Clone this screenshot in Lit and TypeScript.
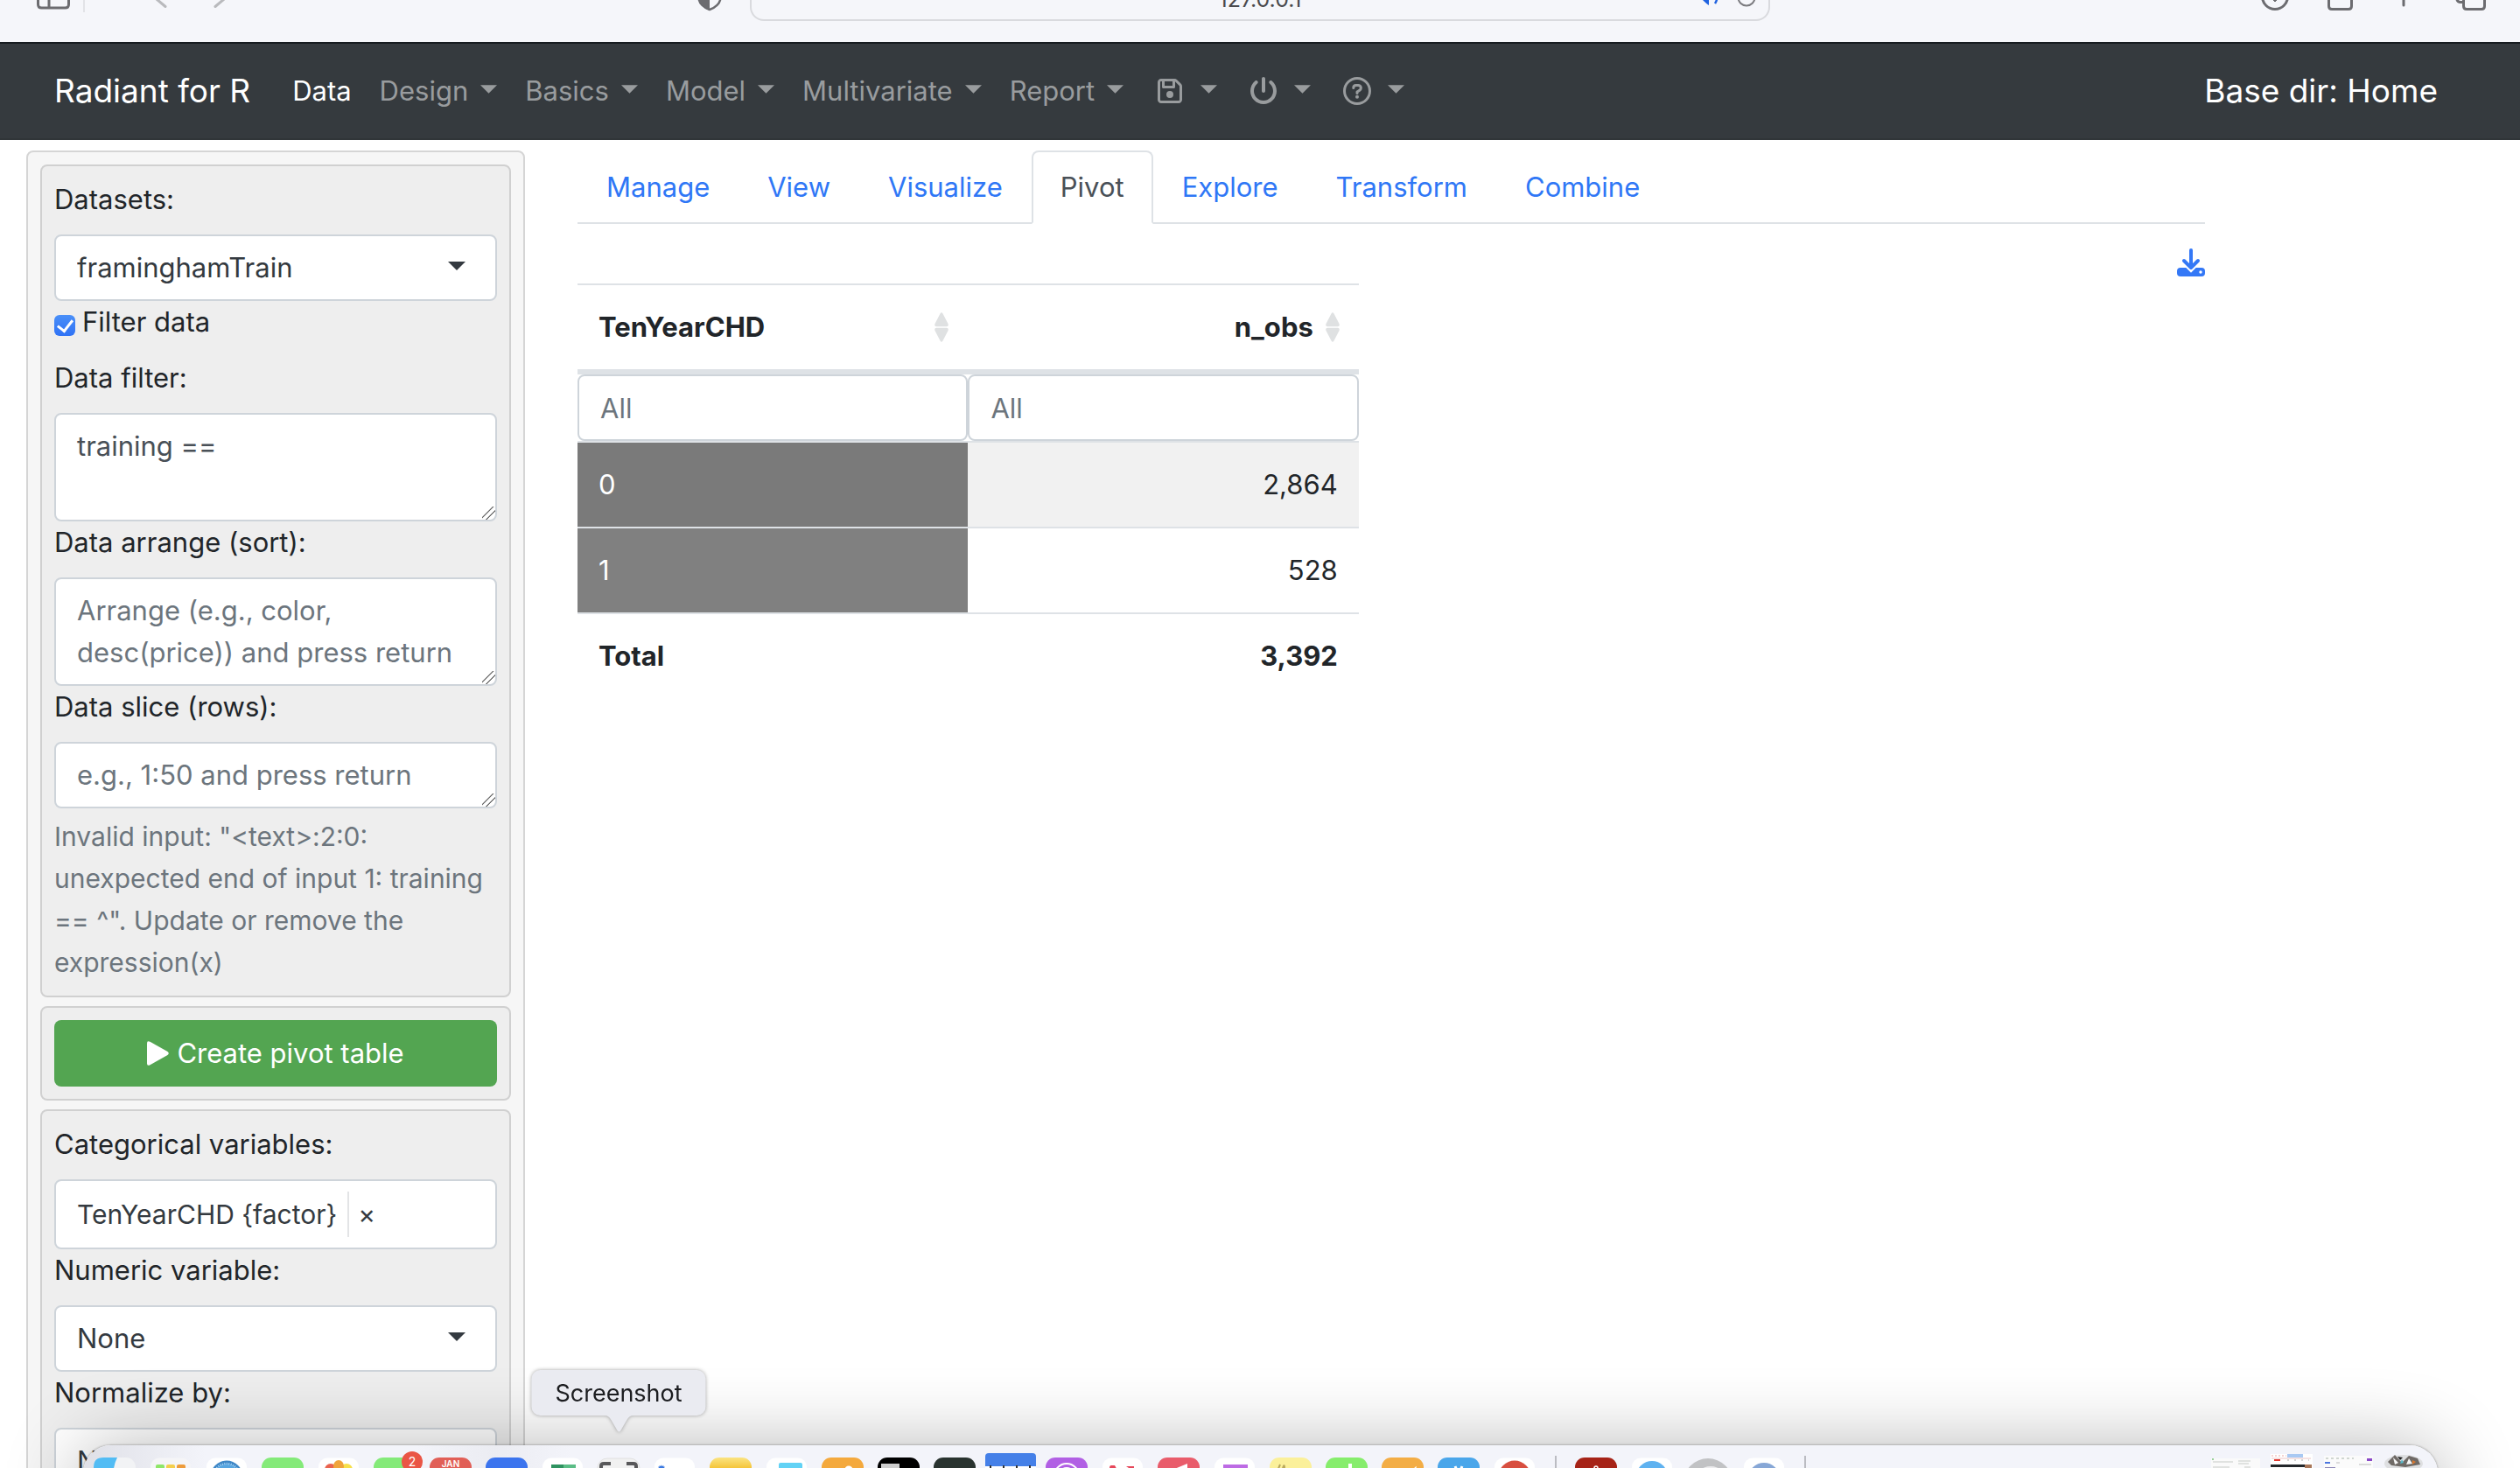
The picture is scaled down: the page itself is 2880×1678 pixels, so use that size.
import { LitElement, html, css, svg, nothing } from "lit";
import { customElement, property } from "lit/decorators.js";

const FONT = css`
  *,
  :host {
    box-sizing: border-box;
  }
  :host {
    font-family: Inter, "Liberation Sans", sans-serif;
    font-size: 31px;
    line-height: 48px;
    color: #212529;
  }
  svg {
    display: block;
    flex: none;
  }
`;

const caret = html`<svg class="caret" width="20" height="10" viewBox="0 0 20 10" aria-hidden="true">
  <path d="M0 0H20L10 10Z" fill="currentColor" />
</svg>`;

@customElement("browser-bar")
export class BrowserBar extends LitElement {
  static styles = [
    FONT,
    css`
      :host {
        display: flex;
        align-items: flex-start;
        height: 48px;
        padding: 0 38px;
        background: #f5f6fa;
        color: #6c6c70;
        overflow: hidden;
      }
      .side {
        display: flex;
        flex: 1;
      }
      .back {
        margin-left: 15px;
      }
      .shield {
        margin-left: auto;
        margin-right: 32px;
      }
      .address {
        display: flex;
        justify-content: flex-end;
        align-items: flex-start;
        position: relative;
        width: 1166px;
        height: 24px;
        padding-right: 14px;
        border: 2px solid #d9dade;
        border-top: 0;
        border-radius: 0 0 16px 16px;
      }
      .host {
        position: absolute;
        left: 0;
        right: 0;
        bottom: 7px;
        text-align: center;
        font-size: 25px;
        line-height: 32px;
        color: #4a4a4d;
      }
      .tools {
        justify-content: flex-end;
      }
    `,
  ];

  render() {
    return html`
      <div class="side">
        <svg width="42" height="12" viewBox="-4 0 42 12" fill="none" stroke="currentColor" stroke-width="3">
          <path d="M1.500-4V5Q1.500 9 5.500 9H32.500Q36.500 9 36.500 5V-4M14 -4V9" />
        </svg>
        <svg class="back" width="164" height="16" viewBox="0 0 164 16" fill="none">
          <path d="M1 0V14" stroke="#e2e3e7" stroke-width="2" />
          <path d="M84-1L94 7.500M161-1L151 7.500" stroke="#b9babd" stroke-width="3" stroke-linecap="round" />
        </svg>
        <svg class="shield" width="28" height="13" viewBox="0 0 28 13">
          <path d="M1.500-3C1.500 4 8 9 14 11C20 9 26.500 4 26.500-3" fill="none" stroke="currentColor" stroke-width="2.500" />
          <path d="M1-3C1 4 8 10 14 12V-3Z" fill="currentColor" />
        </svg>
      </div>
      <div class="address">
        <span class="host">127.0.0.1</span>
        <svg width="62" height="10" viewBox="0 0 62 10">
          <path d="M1-2H8V6Q6 5 1 0Z" fill="#1f62e0" />
          <path d="M17-1Q17 1 15 4" fill="none" stroke="#1f62e0" stroke-width="2.500" />
          <circle cx="51" cy="-3" r="9.500" fill="none" stroke="#7b7b7f" stroke-width="2" />
        </svg>
      </div>
      <div class="side tools">
        <svg width="258" height="13" viewBox="0 0 258 13" fill="none" stroke="currentColor" stroke-width="3">
          <circle cx="16" cy="-4" r="14.500" />
          <path d="M11.500-2.500L16 2L20.500-2.500Z" fill="currentColor" stroke-width="1" />
          <path d="M77.500-4V7Q77.500 10.500 81 10.500H100Q103.500 10.500 103.500 7V-4" />
          <path d="M163-4V6" stroke-linecap="round" />
          <path d="M223.500-4Q223.500 2.500 228 2.500H231" />
          <path d="M231.500-4V7Q231.500 10.500 235 10.500H252Q255.500 10.500 255.500 7V-4" />
        </svg>
      </div>
    `;
  }
}

@customElement("nav-bar")
export class NavBar extends LitElement {
  static styles = [
    FONT,
    css`
      :host {
        display: flex;
        align-items: center;
        height: 112px;
        padding: 0 94px 0 62px;
        background: #353a3e;
        border-top: 2px solid #161b1f;
        border-bottom: 2px solid #303538;
      }
      a {
        color: inherit;
        text-decoration: none;
      }
      .brand,
      .base {
        color: #fff;
        font-size: 37px;
        line-height: 60px;
      }
      .base {
        margin-left: auto;
      }
      .menu {
        display: flex;
        margin-left: 32px;
      }
      .item {
        display: flex;
        align-items: center;
        gap: 14px;
        height: 48px;
        padding: 0 16px;
        color: #999c9e;
      }
      .active {
        color: #fff;
      }
      .icon {
        display: grid;
        place-items: center;
        width: 42px;
      }
      .caret {
        width: 19px;
        margin-bottom: 4px;
      }
    `,
  ];

  render() {
    const menus = ["Design", "Basics", "Model", "Multivariate", "Report"];
    const icons = [
      html`<svg width="28" height="32" viewBox="0 0 448 512" fill="currentColor"><path d="M48 96V416c0 8.800 7.200 16 16 16H384c8.800 0 16-7.200 16-16V170.500c0-4.200-1.700-8.300-4.700-11.300l33.900-33.900c12 12 18.700 28.300 18.700 45.300V416c0 35.300-28.700 64-64 64H64c-35.300 0-64-28.700-64-64V96C0 60.700 28.700 32 64 32H309.500c17 0 33.300 6.700 45.300 18.700l74.500 74.500-33.900 33.900L320.800 84.700c-.3-.3-.5-.5-.8-.8V184c0 13.300-10.700 24-24 24H104c-13.300 0-24-10.700-24-24V80H64c-8.800 0-16 7.200-16 16zm80-16v80H272V80H128zm32 240a64 64 0 1 1 128 0 64 64 0 1 1 -128 0z"/></svg>`,
      html`<svg width="32" height="32" viewBox="0 0 512 512" fill="currentColor"><path d="M288 32c0-17.700-14.300-32-32-32s-32 14.300-32 32V256c0 17.700 14.300 32 32 32s32-14.300 32-32V32zM143.500 120.600c13.600-11.300 15.400-31.500 4.100-45.100s-31.500-15.400-45.100-4.100C49.700 115.400 16 181.800 16 256c0 132.500 107.500 240 240 240s240-107.500 240-240c0-74.200-33.800-140.600-86.600-184.600c-13.600-11.300-33.800-9.400-45.100 4.100s-9.400 33.800 4.100 45.100c38.900 32.300 63.500 81 63.500 135.400c0 97.200-78.800 176-176 176s-176-78.800-176-176c0-54.400 24.700-103.100 63.500-135.400z"/></svg>`,
      html`<svg width="32" height="32" viewBox="0 0 32 32" fill="none" stroke="currentColor" stroke-width="3"><circle cx="16" cy="16" r="14.500"/><path d="M11.800 12.500C11.800 10.500 13 9.500 14.600 9.500H17.200C19 9.500 20.400 10.800 20.400 12.600C20.400 14 19.600 14.800 18.600 15.400L16 17V18.500" stroke-linecap="round" stroke-linejoin="round"/><circle cx="16" cy="22.700" r="2" fill="currentColor" stroke="none"/></svg>`,
    ];
    return html`
      <a class="brand" href="#">Radiant for R</a>
      <nav class="menu">
        <a class="item active" href="#">Data</a>
        ${menus.map((m) => html`<a class="item" href="#">${m}${caret}</a>`)}
        ${icons.map((i) => html`<a class="item" href="#"><span class="icon">${i}</span>${caret}</a>`)}
      </nav>
      <a class="base" href="#">Base dir: Home</a>
    `;
  }
}

@customElement("side-panel")
export class SidePanel extends LitElement {
  static styles = [
    FONT,
    css`
      :host {
        display: flex;
        flex-direction: column;
        gap: 10px;
        min-width: 0;
        padding: 14px;
        border: 2px solid #d5d5d5;
        border-radius: 8px;
        background: #f6f6f6;
      }
      .well {
        padding: 14px;
        border: 2px solid #d0d0d0;
        border-radius: 8px;
        background: #eee;
      }
      label {
        display: block;
      }
      .field {
        margin-bottom: 16px;
      }
      .check {
        display: flex;
        align-items: center;
        gap: 8px;
        margin-bottom: 16px;
      }
      .check input {
        appearance: none;
        display: grid;
        place-items: center;
        width: 24px;
        height: 24px;
        margin: 8px 0 0;
        border-radius: 6px;
        background: linear-gradient(#4a8ff8, #2f72f5);
      }
      .check input::after {
        content: "";
        width: 8px;
        height: 14px;
        margin-bottom: 4px;
        border: solid #fff;
        border-width: 0 3px 3px 0;
        transform: rotate(38deg);
      }
      .select,
      textarea,
      select,
      .tokens {
        display: block;
        width: 100%;
        font: inherit;
      }
      textarea,
      select,
      .tokens {
        margin: 0;
        padding: 12px 24px;
        border: 2px solid #ced4da;
        border-radius: 8px;
        background: #fff;
        color: #495057;
      }
      textarea::placeholder {
        color: #6c757d;
        opacity: 1;
      }
      textarea::-webkit-resizer {
        background: linear-gradient(
          135deg,
          transparent 39%,
          #666 41% 45%,
          transparent 47% 62%,
          #666 64% 68%,
          transparent 70%
        );
      }
      .select {
        display: grid;
        align-items: center;
        color: #343a40;
      }
      .select > * {
        grid-area: 1 / 1;
      }
      select {
        appearance: none;
        height: 76px;
        color: #343a40;
      }
      .caret {
        justify-self: end;
        margin-right: 36px;
        margin-bottom: 4px;
        pointer-events: none;
      }
      .help {
        margin: 8px 0 0;
        color: #6c757d;
        font-size: 30px;
      }
      .run {
        display: flex;
        align-items: center;
        justify-content: center;
        gap: 9px;
        width: 100%;
        height: 76px;
        padding: 0;
        border: 0;
        border-radius: 8px;
        background: #53a551;
        color: #fff;
        font: inherit;
      }
      .tokens {
        display: flex;
        align-items: center;
        height: 80px;
        color: #343a40;
        font-size: 30px;
      }
      .remove {
        height: 52px;
        margin-left: 12px;
        padding: 0 10px;
        border: 0;
        border-left: 2px solid #e3e4e6;
        background: none;
        color: inherit;
        font: inherit;
      }
    `,
  ];

  private select(id: string, value: string) {
    return html`<div class="select">
      <select id=${id}><option>${value}</option></select>
      ${caret}
    </div>`;
  }

  render() {
    return html`
      <section class="well">
        <label class="field" for="dataset">Datasets:</label>
        ${this.select("dataset", "framinghamTrain")}
        <label class="check"><input type="checkbox" checked />Filter data</label>
        <label class="field" for="filter">Data filter:</label>
        <textarea id="filter" rows="2" .value=${"training =="}></textarea>
        <label class="field" for="arrange">Data arrange (sort):</label>
        <textarea id="arrange" rows="2" placeholder="Arrange (e.g., color, desc(price)) and press return"></textarea>
        <label class="field" for="slice">Data slice (rows):</label>
        <textarea id="slice" rows="1" placeholder="e.g., 1:50 and press return"></textarea>
        <p class="help">Invalid input: "&lt;text&gt;:2:0: unexpected end of input 1: training == ^". Update or remove the expression(x)</p>
      </section>
      <section class="well">
        <button class="run">
          <svg width="25" height="28" viewBox="0 0 25 28" fill="currentColor" aria-hidden="true">
            <path d="M0 2.500Q0-1 3.500 .8L23.500 12Q26 14 23.500 16L3.500 27.200Q0 29 0 25.500Z" />
          </svg>
          Create pivot table
        </button>
      </section>
      <section class="well">
        <label class="field" id="categorical">Categorical variables:</label>
        <div class="tokens" role="group" aria-labelledby="categorical">TenYearCHD {factor}<button class="remove">×</button></div>
        <label class="field" for="numeric">Numeric variable:</label>
        ${this.select("numeric", "None")}
        <label class="field" for="normalize">Normalize by:</label>
        ${this.select("normalize", "None")}
      </section>
    `;
  }
}

@customElement("pivot-view")
export class PivotView extends LitElement {
  static styles = [
    FONT,
    css`
      :host {
        display: block;
        min-width: 0;
      }
      .tabs {
        display: flex;
        border-bottom: 2px solid #dee2e6;
      }
      .tab {
        margin-bottom: -2px;
        padding: 16px 31px;
        border: 2px solid transparent;
        border-radius: 8px 8px 0 0;
        color: #2f77f6;
        text-decoration: none;
      }
      .current {
        border-color: #dee2e6 #dee2e6 #fff;
        background: #fff;
        color: #495057;
      }
      .actions {
        display: flex;
        justify-content: flex-end;
        padding: 28px 0 8px;
        color: #3478f6;
      }
      table {
        width: 48%;
        table-layout: fixed;
        border-collapse: separate;
        border-spacing: 0;
      }
      th,
      td {
        padding: 24px;
        border-top: 2px solid #dee2e6;
        text-align: left;
        font-weight: 400;
      }
      .head {
        border-bottom: 6px solid #dee2e6;
        font-weight: 700;
      }
      .sortable {
        display: flex;
        justify-content: space-between;
        align-items: center;
        gap: 14px;
        margin-right: -2px;
      }
      .number {
        text-align: right;
      }
      .number .sortable {
        justify-content: flex-end;
      }
      .search {
        padding: 0;
        border: 0;
      }
      input {
        display: block;
        width: 100%;
        height: 76px;
        padding: 12px 24px;
        border: 2px solid #ced4da;
        border-radius: 8px;
        font: inherit;
      }
      input::placeholder {
        color: #6c757d;
        opacity: 1;
      }
      .group {
        background: #808080;
        color: #fff;
      }
      .odd {
        background: #f1f1f1;
      }
      .odd .group {
        background: #7a7a7a;
      }
      .total {
        font-weight: 700;
      }
    `,
  ];

  render() {
    const tabs = ["Manage", "View", "Visualize", "Pivot", "Explore", "Transform", "Combine"];
    const rows = [
      ["0", "2,864"],
      ["1", "528"],
    ];
    const sort = html`<svg width="16" height="34" viewBox="0 0 16 34" fill="#dfe1e2" aria-hidden="true">
      <path d="M6.500 1.500Q8-1.200 9.500 1.500L15.500 13Q16.500 16.300 14 16.300H2Q-.5 16.300 .5 13ZM2 17.700H14Q16.500 17.700 15.500 21L9.500 32.500Q8 35.200 6.500 32.500L.5 21Q-.5 17.700 2 17.700Z" />
    </svg>`;
    return html`
      <nav class="tabs">
        ${tabs.map((t) => html`<a class="tab ${t === "Pivot" ? "current" : ""}" href="#">${t}</a>`)}
      </nav>
      <div class="actions">
        <svg width="32" height="32" viewBox="0 0 32 32" aria-hidden="true">
          <rect x="0" y="22" width="32" height="10" rx="4" fill="currentColor" />
          <path d="M8 15.500L16 23.500L24 15.500" fill="none" stroke="#fff" stroke-width="6" />
          <path d="M16 2V21M8 14L16 22L24 14" fill="none" stroke="currentColor" stroke-width="4" stroke-linecap="round" stroke-linejoin="round" />
          <circle cx="27" cy="27" r="1.700" fill="#fff" />
        </svg>
      </div>
      <table>
        <thead>
          <tr>
            <th class="head"><div class="sortable">TenYearCHD${sort}</div></th>
            <th class="head number"><div class="sortable">n_obs${sort}</div></th>
          </tr>
          <tr>
            <td class="search"><input type="search" placeholder="All" /></td>
            <td class="search"><input type="search" placeholder="All" /></td>
          </tr>
        </thead>
        <tbody>
          ${rows.map(
            ([k, n], i) => html`<tr class=${i % 2 ? "even" : "odd"}>
              <td class="group">${k}</td>
              <td class="number">${n}</td>
            </tr>`,
          )}
        </tbody>
        <tfoot>
          <tr>
            <th class="total">Total</th>
            <th class="total number">3,392</th>
          </tr>
        </tfoot>
      </table>
    `;
  }
}

const tile = (fill: string) => svg`<rect x="0" y="0" width="48" height="48" rx="11" fill=${fill} />`;
const pale = svg`<rect x="1" y="0.500" width="46" height="47" rx="10" fill="#fff" />`;

const APPS = [
  svg`${tile("#f2f3f5")}<path d="M11 0H27Q23 8 22 20H0V11Q0 0 11 0Z" fill="#52bcf4"/>`,
  svg`<rect x="1" y="0.500" width="46" height="47" rx="10" fill="#f5f5f7"/><rect x="7" y="8" width="10" height="9" rx="2" fill="#8fe668"/><rect x="19" y="8" width="10" height="9" rx="2" fill="#f4cf4d"/><rect x="31" y="8" width="10" height="9" rx="2" fill="#ee9c3b"/>`,
  svg`${pale}<circle cx="24" cy="22" r="18.500" fill="#3d86c6"/><circle cx="24" cy="22" r="15" fill="#57a5e0" stroke="#a9d3f2" stroke-width="2.500" stroke-dasharray="1 1.500"/>`,
  svg`${tile("#84ea79")}<ellipse cx="24" cy="22" rx="15" ry="10" fill="#fff"/>`,
  svg`${pale}<circle cx="15" cy="14" r="7" fill="#e9634f"/><circle cx="33" cy="14" r="7" fill="#f7e04a"/><ellipse cx="24" cy="10" rx="6" ry="7" fill="#f0a43b"/>`,
  svg`${tile("#84ea79")}`,
  svg`${tile("#e15f57")}<text x="24" y="11" text-anchor="middle" font-size="10" font-weight="600" fill="#fff">JAN</text>`,
  svg`${tile("#3b74ee")}`,
  svg`${pale}<rect x="11" y="8" width="28" height="30" fill="#2f9360"/><rect x="25" y="8" width="14" height="30" fill="#5bbd86"/>`,
  svg`<rect x="0" y="1" width="48" height="48" rx="11" fill="#f1f1f1" stroke="#e1e1e1"/><path d="M4 20V10Q4 7 7 7H15M33 7H41Q44 7 44 10V20" fill="none" stroke="#58585a" stroke-width="4"/>`,
  svg`${pale}<circle cx="9" cy="13" r="4" fill="#3a78e0" stroke="#bcd2f5"/><path d="M18 12.500H43" stroke="#cfcfd2"/>`,
  svg`<defs><linearGradient id="note" x1="0" y1="0" x2="0" y2="1"><stop offset="0" stop-color="#fbe482"/><stop offset="0.250" stop-color="#f5c53a"/></linearGradient></defs>${tile("url(#note)")}`,
  svg`${pale}<rect x="15" y="6" width="27" height="30" rx="2" fill="#62d2f5"/>`,
  svg`${tile("#f4a93d")}<circle cx="31" cy="14" r="4.500" fill="#fff"/>`,
  svg`${tile("#000")}<rect x="4" y="7" width="21" height="12" fill="#cfcfcf"/>`,
  svg`${tile("#29332f")}`,
  svg`<rect x="-5" y="-5" width="58" height="50" rx="4" fill="#4580e8"/><rect x="-5" y="10" width="58" height="20" fill="#fff"/><path d="M1 9V15M16 9V15M31 9V15M46 9V15" stroke="#333" stroke-width="2"/>`,
  svg`${tile("#b15fe4")}<circle cx="24" cy="21" r="14" fill="none" stroke="#fff" stroke-width="2"/><circle cx="24" cy="21" r="9" fill="none" stroke="#fff" stroke-width="2"/>`,
  svg`${pale}<path d="M9 12Q9 9 11 9H15L20 18H9ZM28 10H37V18L34 14Z" fill="#e6475a"/>`,
  svg`${tile("#e95c6b")}<path d="M17 14L34 7V16H17Z" fill="#fff"/>`,
  svg`${pale}<rect x="11" y="8" width="28" height="30" fill="#bd6be4"/>`,
  svg`${tile("#fbf09a")}<path d="M9 15L12 8M14 16Q17 4 17 13M20 14L24 17" stroke="#b9a85c" stroke-width="2" fill="none"/>`,
  svg`${tile("#86ed6c")}<rect x="26" y="7" width="4" height="20" fill="#fff"/>`,
  svg`${tile("#f3ad45")}<path d="M33 18Q36 12 40 10L38 18Z" fill="#fff"/>`,
  svg`${tile("#4aa6ea")}<path d="M20 10L23 17M28 10L25 17" stroke="#fff" stroke-width="3"/>`,
  svg`${pale}<circle cx="24" cy="22" r="18.500" fill="#d84f40"/>`,
];

const RECENT = [
  svg`${tile("#a62317")}<circle cx="24" cy="12" r="2" fill="none" stroke="#fff" stroke-width="1.500"/>`,
  svg`${pale}<circle cx="24" cy="22" r="18" fill="#5fb2f0"/>`,
  svg`<circle cx="24" cy="29" r="28" fill="#c1c2c4"/><circle cx="27" cy="29" r="19" fill="#ececee"/>`,
  svg`${pale}<circle cx="24" cy="24" r="18" fill="#87a7d6"/>`,
];

const WINDOWS = [
  svg`<rect x="-1" y="1" width="56" height="40" fill="#fafafa"/><path d="M1 5H24M30 4H44M1 11H20M30 7H42M37 11H44" stroke="#c6cac6"/><circle cx="1" cy="2" r="1" fill="#79c279"/>`,
  svg`<rect x="2" y="-4" width="48" height="40" fill="#fff"/><path d="M3-2H20" stroke="#eba9a6" stroke-dasharray="2 2"/><rect x="21" y="-4" width="18" height="4" fill="#a9c9f3"/><path d="M3 1H48" stroke="#ecc6c6"/><rect x="6" y="2" width="7" height="2" fill="#e23b32"/><path d="M21 3H46" stroke="#aaa" stroke-dasharray="2 6"/><rect x="2" y="8" width="40" height="3" fill="#23272b"/><rect x="41" y="8" width="8" height="6" fill="#a8775a"/>`,
  svg`<rect x="-2" y="-2" width="56" height="40" fill="#fbfbfb"/><path d="M0 1H32" stroke="#a7b3a9" stroke-dasharray="3 3"/><rect x="47" y="1" width="6" height="3" fill="#8a49c8"/><rect x="-1" y="5" width="6" height="2" fill="#4b76e0"/><path d="M12 6H16M38 8H52" stroke="#bbb"/><rect x="-1" y="11" width="12" height="2" fill="#8f89b8"/>`,
  svg`<ellipse cx="24" cy="7" rx="22" ry="10" fill="#dedfe1"/><path d="M6 5L14-3L22 6L30-2L40 1L43 8L26 11L10 9Z" fill="#6f6a66"/><path d="M12 0L18 6L14 8ZM30 1L34 7L27 8Z" fill="#f6f6f6"/><path d="M22 2L24 6L20 7Z" fill="#57b8c9"/><path d="M34 3L38 5L34 8Z" fill="#d7772f"/><path d="M17-1L20 3L23 0Z" fill="#222"/>`,
];

@customElement("dock-icon")
export class DockIcon extends LitElement {
  static styles = css`
    :host {
      display: block;
      position: relative;
      width: 48px;
      height: 48px;
      font-family: Inter, sans-serif;
    }
    svg {
      display: block;
      overflow: visible;
    }
    .badge {
      position: absolute;
      top: -7px;
      right: -8px;
      width: 24px;
      height: 24px;
      border-radius: 12px;
      background: #ea5545;
      color: #fff;
      font-size: 14px;
      line-height: 24px;
      text-align: center;
    }
    .tip {
      position: absolute;
      bottom: 100%;
      left: 50%;
      margin-bottom: 48px;
      padding: 11px 27px 9px;
      border-radius: 10px;
      background: #eaebf1;
      color: #1c1d20;
      font-size: 27px;
      line-height: 32px;
      transform: translateX(-50%);
      filter: drop-shadow(0 0 2px rgba(0, 0, 0, 0.35));
    }
    .arrow {
      position: absolute;
      top: 100%;
      left: 50%;
      margin-left: -16px;
    }
  `;

  @property({ attribute: false }) art: unknown;
  @property() badge = "";
  @property() tip = "";

  render() {
    return html`
      <svg width="48" height="48" viewBox="0 0 48 48">${this.art}</svg>
      ${this.badge ? html`<span class="badge">${this.badge}</span>` : nothing}
      ${this.tip
        ? html`<span class="tip">${this.tip}<svg class="arrow" width="32" height="19" viewBox="0 0 32 19"><path d="M0 0H32Q28 0 25 5L18 17Q16 20 14 17L7 5Q4 0 0 0Z" fill="#eaebf1" /></svg></span>`
        : nothing}
    `;
  }
}

@customElement("app-dock")
export class AppDock extends LitElement {
  static styles = css`
    :host {
      display: flex;
      gap: 16px;
      padding: 14px 12px 120px;
      border-radius: 32px;
      background: linear-gradient(90deg, #dfe0e7, #f3f4fa 140px, #f3f4fa 380px, #ebecf2 470px, #f3f4fa 560px);
      box-shadow:
        0 0 2px 1px rgba(0, 0, 0, 0.2),
        0 6px 90px rgba(0, 0, 0, 0.32);
    }
    .rule {
      width: 2px;
      height: 48px;
      margin: -2px 5px 0 6px;
      background: #bbbcc2;
    }
    .end {
      display: flex;
      gap: 17px;
      margin-left: auto;
      margin-right: 3px;
    }
  `;

  render() {
    return html`
      ${APPS.map(
        (a, i) => html`<dock-icon .art=${a} .badge=${i === 5 ? "2" : ""} .tip=${i === 9 ? "Screenshot" : ""}></dock-icon>`,
      )}
      <div class="rule"></div>
      ${RECENT.map((a) => html`<dock-icon .art=${a}></dock-icon>`)}
      <div class="rule"></div>
      <div class="end">${WINDOWS.map((a) => html`<dock-icon .art=${a}></dock-icon>`)}</div>
    `;
  }
}

@customElement("app-root")
export class AppRoot extends LitElement {
  static styles = css`
    :host {
      display: block;
      position: relative;
      height: 100vh;
      overflow: hidden;
      background: #fff;
    }
    .page {
      display: grid;
      grid-template-columns: 19fr 62fr 9fr;
      column-gap: 60px;
      padding: 12px 30px;
    }
    app-dock {
      position: absolute;
      left: 95px;
      right: 94px;
      bottom: -156px;
    }
  `;

  render() {
    return html`
      <browser-bar></browser-bar>
      <nav-bar></nav-bar>
      <main class="page">
        <side-panel></side-panel>
        <pivot-view></pivot-view>
      </main>
      <app-dock></app-dock>
    `;
  }
}
